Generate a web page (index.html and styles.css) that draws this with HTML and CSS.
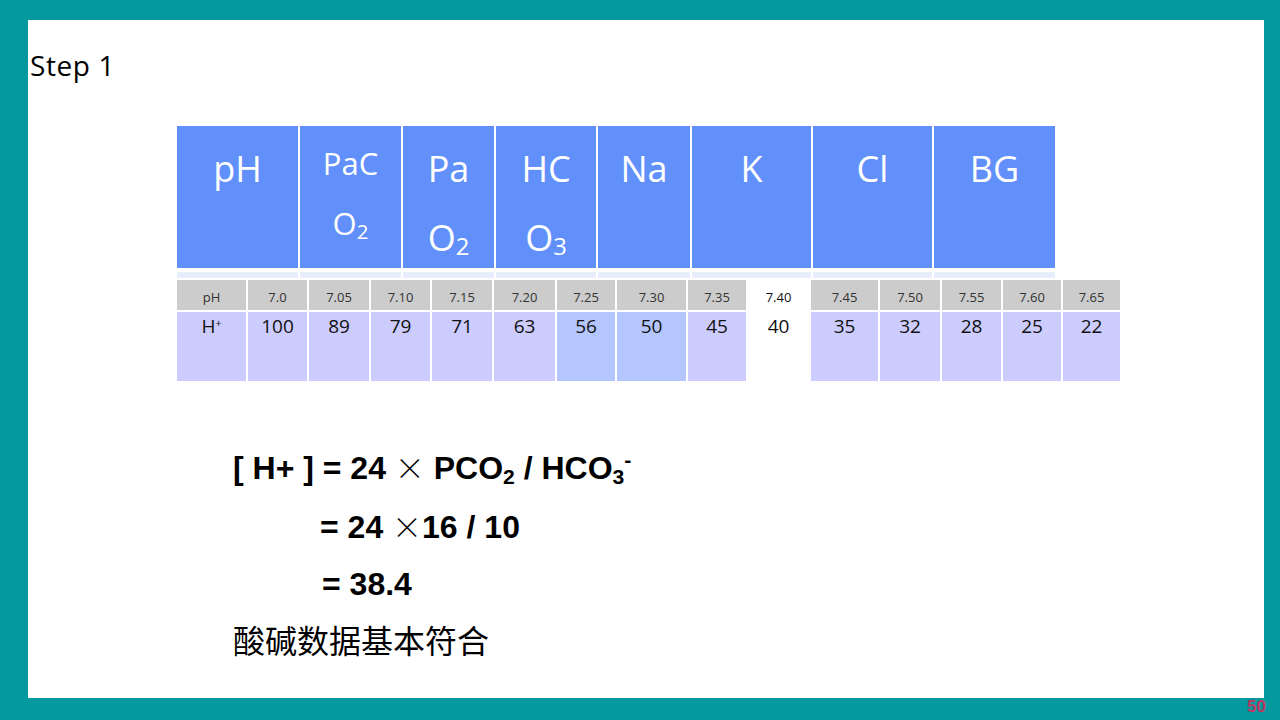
FILE: index.html
```html
<!DOCTYPE html>
<html lang="zh-CN">
<head>
<meta charset="utf-8">
<title>Step 1</title>
<link rel="stylesheet" href="styles.css">
</head>
<body>
<div class="slide">
  <h1 class="title">Step 1</h1>

  <div class="head-grid">
    <div class="hcell">pH</div>
    <div class="hcell small">PaC<br>O<sub>2</sub></div>
    <div class="hcell">Pa<br>O<sub>2</sub></div>
    <div class="hcell">HC<br>O<sub>3</sub></div>
    <div class="hcell">Na</div>
    <div class="hcell">K</div>
    <div class="hcell">Cl</div>
    <div class="hcell">BG</div>
  </div>
  <div class="strip-grid">
    <div></div><div></div><div></div><div></div><div></div><div></div><div></div><div></div>
  </div>

  <div class="data-grid">
    <div class="dh">pH</div>
    <div class="dh">7.0</div>
    <div class="dh">7.05</div>
    <div class="dh">7.10</div>
    <div class="dh">7.15</div>
    <div class="dh">7.20</div>
    <div class="dh">7.25</div>
    <div class="dh">7.30</div>
    <div class="dh">7.35</div>
    <div class="dh blank">7.40</div>
    <div class="dh">7.45</div>
    <div class="dh">7.50</div>
    <div class="dh">7.55</div>
    <div class="dh">7.60</div>
    <div class="dh">7.65</div>

    <div class="dv">H<sup>+</sup></div>
    <div class="dv">100</div>
    <div class="dv">89</div>
    <div class="dv">79</div>
    <div class="dv">71</div>
    <div class="dv">63</div>
    <div class="dv hi">56</div>
    <div class="dv hi">50</div>
    <div class="dv">45</div>
    <div class="dv blank">40</div>
    <div class="dv">35</div>
    <div class="dv">32</div>
    <div class="dv">28</div>
    <div class="dv">25</div>
    <div class="dv">22</div>
  </div>

  <div class="formula">
    <p class="f1">[ H+ ] = 24 <span class="times">×</span> PCO<sub>2</sub> / HCO<sub>3</sub><sup>-</sup></p>
    <p class="f2">= 24 <span class="times">×</span>16 / 10</p>
    <p class="f3">= 38.4</p>
    <p class="cn">酸碱数据基本符合</p>
  </div>
</div>
<div class="footer"><span class="pnum">50</span></div>
</body>
</html>
```

FILE: styles.css
```css
html, body {
  margin: 0;
  padding: 0;
}
body {
  width: 1280px;
  height: 720px;
  background: #04989f;
  padding: 20px 0 0 28px;
  box-sizing: border-box;
  overflow: hidden;
}
.slide {
  width: 1236px;
  height: 678px;
  background: #ffffff;
  padding-left: 2px;
  box-sizing: border-box;
  overflow: hidden;
  font-family: "Open Sans", "Liberation Sans", sans-serif;
}
.title {
  margin: 26px 0 0 0;
  font-size: 28px;
  font-weight: 400;
  line-height: 38px;
  color: #000;
  letter-spacing: 0.6px;
}

.head-grid, .strip-grid {
  display: grid;
  grid-template-columns: 121px 101px 91px 100px 92px 119px 119px 121px;
  column-gap: 2px;
  margin-left: 147px;
}
.head-grid {
  margin-top: 42px;
  grid-template-rows: 142px;
}
.hcell {
  background: #6290fb;
  color: #ffffff;
  font-size: 36px;
  line-height: 69px;
  text-align: center;
  padding-top: 8px;
  box-sizing: border-box;
  overflow: hidden;
  min-height: 0;
}
.hcell.small {
  font-size: 31px;
  line-height: 60px;
  padding-top: 7px;
}
.hcell sub {
  font-size: 0.66em;
  line-height: 0;
  vertical-align: -0.18em;
}
.strip-grid {
  margin-top: 4px;
  grid-template-rows: 6px;
}
.strip-grid div {
  background: #e8edfc;
}

.data-grid {
  display: grid;
  grid-template-columns: 69px 59px 60px 59px 60px 61px 58px 69px 58px 61px 67px 60px 59px 58px 57px;
  grid-template-rows: 30px 69px;
  column-gap: 2px;
  row-gap: 2px;
  margin-left: 147px;
  margin-top: 2px;
}
.dh {
  background: #cccccc;
  color: #333333;
  font-size: 13px;
  text-align: center;
  display: flex;
  align-items: center;
  justify-content: center;
  padding-top: 3px;
  box-sizing: border-box;
}
.dv {
  background: #ccccfe;
  color: #111111;
  font-size: 19px;
  line-height: 26px;
  text-align: center;
  padding-top: 1px;
  box-sizing: border-box;
}
.dv sup {
  font-size: 0.55em;
  line-height: 0;
  vertical-align: 0.6em;
}
.dv.hi { background: #b5c6fe; }
.blank { background: #ffffff; }
.dh.blank { color: #111; }

.formula {
  margin: 57px 0 0 203px;
  font-family: "Liberation Sans", Arial, sans-serif;
  font-weight: 700;
  font-size: 32px;
  color: #000;
}
.formula p {
  margin: 0;
  line-height: 57px;
  white-space: nowrap;
}
.formula .f2 { padding-left: 87px; }
.formula .f3 { padding-left: 89px; }
.formula .times {
  font-family: "Noto Sans CJK SC", "DejaVu Sans", sans-serif;
  font-weight: 300;
  font-size: 30px;
}
.formula sub {
  font-size: 0.66em;
  line-height: 0;
  vertical-align: -0.25em;
}
.formula sup {
  font-size: 0.66em;
  line-height: 0;
  vertical-align: 0.55em;
}
.formula .cn {
  font-family: "Noto Sans CJK SC", sans-serif;
  font-weight: 400;
  font-size: 32px;
  margin-top: -2px;
}

.footer {
  width: 1236px;
  text-align: right;
  height: 22px;
  line-height: 18px;
  box-sizing: border-box;
}
.pnum {
  font-family: "Liberation Sans", Arial, sans-serif;
  font-weight: 700;
  font-size: 17px;
  color: #bd3660;
  margin-right: -2px;
}
```
